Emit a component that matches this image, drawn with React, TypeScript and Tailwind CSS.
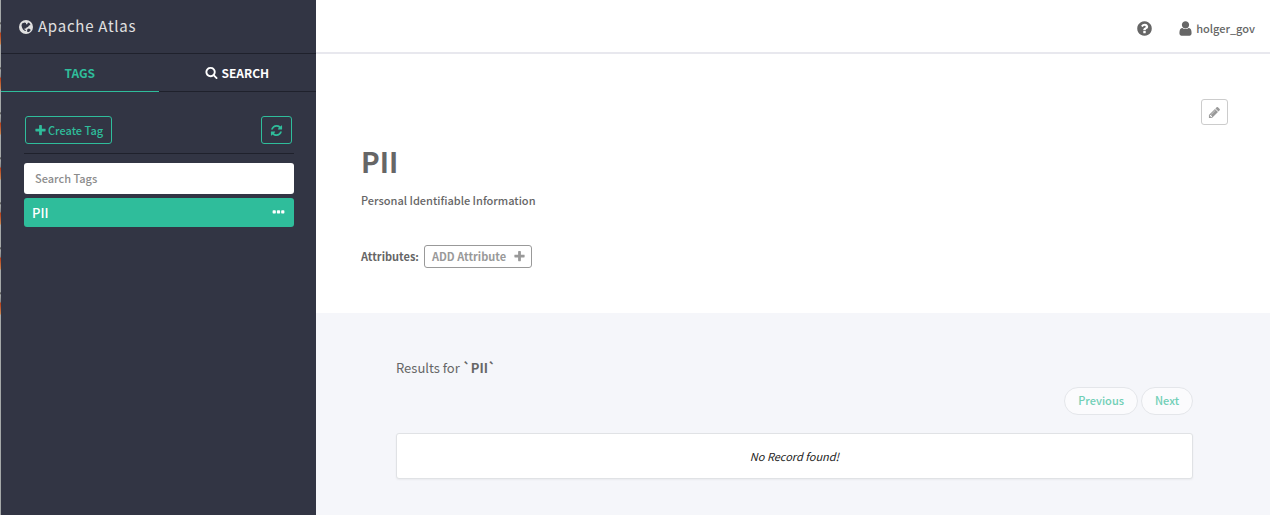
import type { ReactNode } from "react";

const paths = {
  plus: "M1600 736v192q0 40-28 68t-68 28h-416v416q0 40-28 68t-68 28h-192q-40 0-68-28t-28-68v-416h-416q-40 0-68-28t-28-68v-192q0-40 28-68t68-28h416v-416q0-40 28-68t68-28h192q40 0 68 28t28 68v416h416q40 0 68 28t28 68z",
  search:
    "M1216 832q0-185-131.5-316.5t-316.5-131.5-316.5 131.5-131.5 316.5 131.5 316.5 316.5 131.5 316.5-131.5 131.5-316.5zm512 832q0 52-38 90t-90 38q-54 0-90-38l-343-342q-179 124-399 124-143 0-273.5-55.5t-225-150-150-225-55.5-273.5 55.5-273.5 150-225 225-150 273.5-55.5 273.5 55.5 225 150 150 225 55.5 273.5q0 220-124 399l343 343q37 37 37 90z",
  refresh:
    "M1639 1056q0 5-1 7-64 268-268 434.5t-478 166.5q-146 0-282.5-55t-243.5-157l-129 129q-19 19-45 19t-45-19-19-45v-448q0-26 19-45t45-19h448q26 0 45 19t19 45-19 45l-137 137q71 66 161 102t187 36q134 0 250-65t186-179q11-17 53-117 8-23 30-23h192q13 0 22.5 9.5t9.5 22.5zm25-800v448q0 26-19 45t-45 19h-448q-26 0-45-19t-19-45 19-45l138-138q-148-137-349-137-134 0-250 65t-186 179q-11 17-53 117-8 23-30 23h-199q-13 0-22.5-9.5t-9.5-22.5v-7q65-268 270-434.5t480-166.5q146 0 284 55.5t245 156.5l130-129q19-19 45-19t45 19 19 45z",
  pencil:
    "M491 1536l91-91-235-235-91 91v107h128v128h107zm523-928q0-22-22-22-10 0-17 7l-542 542q-7 7-7 17 0 22 22 22 10 0 17-7l542-542q7-7 7-17zm-54-192l416 416-832 832h-416v-416zm683 96q0 53-37 90l-166 166-416-416 166-165q36-38 90-38 53 0 91 38l235 234q37 39 37 91z",
  question:
    "M1024 1376v-192q0-14-9-23t-23-9h-192q-14 0-23 9t-9 23v192q0 14 9 23t23 9h192q14 0 23-9t9-23zm256-672q0-88-55.5-163t-138.5-116-170-41q-243 0-371 213-15 24 8 42l132 100q7 6 19 6 16 0 25-12 53-68 86-92 34-24 86-24 48 0 85.5 26t37.5 59q0 38-20 61t-68 45q-63 28-115.5 86.5t-52.5 125.5v36q0 14 9 23t23 9h192q14 0 23-9t9-23q0-19 21.5-49.5t54.5-49.5q32-18 49-28.5t46-35 44.5-48 28-60.5 12.5-81zm384 192q0 209-103 385.5t-279.5 279.5-385.5 103-385.5-103-279.5-279.5-103-385.5 103-385.5 279.5-279.5 385.5-103 385.5 103 279.5 279.5 103 385.5z",
  user: "M1536 1399q0 109-62.5 187t-150.5 78h-854q-88 0-150.5-78t-62.5-187q0-85 8.5-160.5t31.5-152 58.5-131 94-89 134.5-34.5q131 128 313 128t313-128q76 0 134.5 34.5t94 89 58.5 131 31.5 152 8.5 160.5zm-256-887q0 159-112.5 271.5t-271.5 112.5-271.5-112.5-112.5-271.5 112.5-271.5 271.5-112.5 271.5 112.5 112.5 271.5z",
  ellipsis:
    "M576 736v192q0 40-28 68t-68 28h-192q-40 0-68-28t-28-68v-192q0-40 28-68t68-28h192q40 0 68 28t28 68zm512 0v192q0 40-28 68t-68 28h-192q-40 0-68-28t-28-68v-192q0-40 28-68t68-28h192q40 0 68 28t28 68zm512 0v192q0 40-28 68t-68 28h-192q-40 0-68-28t-28-68v-192q0-40 28-68t68-28h192q40 0 68 28t28 68z",
};

function Icon({ name, className }: { name: keyof typeof paths; className: string }) {
  return (
    <svg viewBox="0 0 1792 1792" fill="currentColor" aria-hidden="true" className={className}>
      <path d={paths[name]} />
    </svg>
  );
}

function Globe() {
  return (
    <svg viewBox="0 0 28 28" aria-hidden="true" className="size-3.5 shrink-0">
      <circle cx="14" cy="14" r="14" fill="#e0e0e0" />
      <path
        fill="#323544"
        d="M6 7l5-2 3 1 0 2 2 1 2-4 3 1 2 4-3 1-2 3-3 1-1 2-3 0 0 2 2 1 1 2-2 0-4-3-2-4-1-4z M17 18l3-1 3 2 0 2-3 3-3 0-1-2z"
      />
    </svg>
  );
}

function PageButton({ children }: { children: ReactNode }) {
  return (
    <button
      type="button"
      className="h-7 rounded-full border border-[#e4e6ea] bg-[#fbfbfd] px-[13px] pb-0.5 text-[11px] font-medium text-[#70cfb6]"
    >
      {children}
    </button>
  );
}

export default function App() {
  return (
    <div className="flex min-h-screen bg-[#f5f6fa] font-['Noto_Sans_CJK_SC','Noto_Sans',sans-serif] text-[11px] font-medium text-[#666]">
      <div className="w-px shrink-0 bg-[#a5a8a8] bg-[repeating-linear-gradient(#a5a8a8_0px,#a5a8a8_22px,#454545_23px,#a5a8a8_25px,#858585_32px,#b83c18_33px,#c98550_44px,#a5a8a8_45px)] bg-size-[1px_325px] bg-no-repeat" />
      <aside className="w-[315px] shrink-0 bg-[#323544]">
        <header className="flex h-[53px] items-center gap-[5px] px-[18px] text-[#e0e0e0]">
          <Globe />
          <h1 className="text-[15px] font-normal tracking-wider">Apache Atlas</h1>
        </header>
        <nav className="flex h-[39px] border-t border-[#1f212c] text-xs font-bold">
          <a
            href="#tags"
            className="flex flex-1 items-center justify-center border-b border-[#2fbd9b] text-[#2fbd9b]"
          >
            TAGS
          </a>
          <a
            href="#search"
            className="flex flex-1 items-center justify-center gap-[3px] border-b border-[#1f212c] text-white"
          >
            <Icon name="search" className="size-[13px]" />
            SEARCH
          </a>
        </nav>
        <div className="pt-6 pr-[22px] pl-[23px]">
          <div className="flex items-start justify-between border-b border-[#1f212c] pr-0.5 pb-[9px] pl-px">
            <button
              type="button"
              className="flex h-7 items-center gap-px rounded-[3px] border border-[#2fbd9b] px-2 text-[#2fbd9b]"
            >
              <Icon name="plus" className="size-[13px]" />
              Create Tag
            </button>
            <button
              type="button"
              aria-label="Refresh"
              className="flex h-7 w-[31px] items-center justify-center rounded-[3px] border border-[#2fbd9b] text-[#2fbd9b]"
            >
              <Icon name="refresh" className="size-[13px]" />
            </button>
          </div>
          <input
            type="text"
            aria-label="Search Tags"
            placeholder="Search Tags"
            className="mt-[9px] block h-[31px] w-full rounded-[3px] bg-white px-[11px] pb-0.5 text-[#555] placeholder:text-[#8c8c8c]"
          />
          <ul className="mt-1">
            <li className="flex h-[29px] items-center justify-between rounded-[3px] bg-[#2fbd9b] px-2 text-white">
              <a href="#pii" className="text-[13px]">
                PII
              </a>
              <button type="button" aria-label="Tag options">
                <Icon name="ellipsis" className="size-[15px]" />
              </button>
            </li>
          </ul>
        </div>
      </aside>
      <main className="min-w-0 flex-1">
        <header className="flex h-[54px] items-center justify-end gap-6 border-b-2 border-[#e8e8ee] bg-white px-[15px] pt-1">
          <a href="#help" aria-label="Help">
            <Icon name="question" className="size-[17px]" />
          </a>
          <a href="#account" className="flex items-center gap-0.5">
            <Icon name="user" className="size-[17px]" />
            holger_gov
          </a>
        </header>
        <section className="bg-white pt-[45px] pr-[42px] pb-[45px] pl-[45px]">
          <div className="flex justify-end">
            <button
              type="button"
              aria-label="Edit"
              className="flex h-[26px] w-[27px] items-center justify-center rounded-[3px] border border-[#ccc] text-[#999]"
            >
              <Icon name="pencil" className="size-[13px]" />
            </button>
          </div>
          <h2 className="mt-4 text-[28px] leading-10 font-semibold">PII</h2>
          <p className="mt-[9px] leading-5">Personal Identifiable Information</p>
          <div className="mt-[35px] flex items-center gap-[5px] font-bold">
            <span>Attributes:</span>
            <button
              type="button"
              className="flex h-[23px] items-center gap-[7px] rounded-[3px] border border-[#999] pr-[5px] pl-[7px] text-[#999]"
            >
              ADD Attribute
              <Icon name="plus" className="size-[13px]" />
            </button>
          </div>
        </section>
        <section className="pt-[45px] pr-[77px] pb-9 pl-20">
          <h3 className="text-[13px] leading-5 font-normal">
            Results for <b>`PII`</b>
          </h3>
          <div className="mt-[9px] flex justify-end gap-[3px]">
            <PageButton>Previous</PageButton>
            <PageButton>Next</PageButton>
          </div>
          <div className="mt-[18px] flex h-[46px] items-center justify-center rounded-[3px] border border-[#e0e2e5] bg-white font-normal text-[#222] italic shadow-xs">
            No Record found!
          </div>
        </section>
      </main>
    </div>
  );
}
